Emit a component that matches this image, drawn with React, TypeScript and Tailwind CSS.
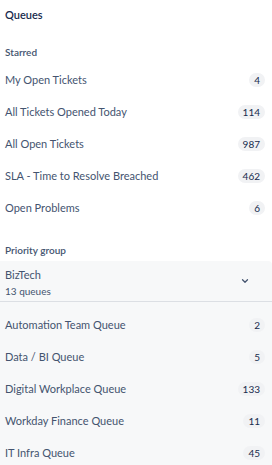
import React from "react";

type Queue = { name: string; count: number };

const starred: Queue[] = [
  { name: "My Open Tickets", count: 4 },
  { name: "All Tickets Opened Today", count: 114 },
  { name: "All Open Tickets", count: 987 },
  { name: "SLA - Time to Resolve Breached", count: 462 },
  { name: "Open Problems", count: 6 },
];

const bizTech: Queue[] = [
  { name: "Automation Team Queue", count: 2 },
  { name: "Data / BI Queue", count: 5 },
  { name: "Digital Workplace Queue", count: 133 },
  { name: "Workday Finance Queue", count: 11 },
  { name: "IT Infra Queue", count: 45 },
];

const QueueRow = ({ queue }: { queue: Queue }) => (
  <div className="flex h-8 items-center justify-between pl-[5px] pr-[7px]">
    <span className="text-[11px] text-[#44546f]">{queue.name}</span>
    <span className="flex h-[14px] min-w-[15px] items-center justify-center rounded-full bg-[#f1f2f4] px-[5px] text-[10px] text-[#172b4d]">
      {queue.count}
    </span>
  </div>
);

export default function App() {
  return (
    <div
      className="flex h-[465px] w-[272px] flex-col overflow-hidden bg-white"
      style={{ fontFamily: "Lato, 'Noto Sans', sans-serif" }}
    >
      <h1 className="px-[5px] pt-[7px] text-[11px] font-semibold leading-4 text-[#172b4d]">
        Queues
      </h1>
      <p className="mt-[21px] px-[5px] text-[10px] font-semibold leading-4 text-[#44546f]">
        Starred
      </p>
      <div className="mt-[4px] flex flex-col">
        {starred.map((q) => (
          <QueueRow key={q.name} queue={q} />
        ))}
      </div>
      <p className="mt-[18px] px-[5px] text-[10px] font-semibold leading-4 text-[#44546f]">
        Priority group
      </p>
      <div className="mt-[3px] flex flex-1 flex-col rounded-tr-[4px] bg-[#f7f8f9]">
        <div className="flex h-[41px] items-center justify-between border-b border-[#dcdfe4] pl-[5px] pr-[22px]">
          <div className="flex flex-col pt-[3px]">
            <span className="text-[11px] leading-4 text-[#44546f]">BizTech</span>
            <span className="text-[10px] leading-4 text-[#44546f]">13 queues</span>
          </div>
          <svg width="10" height="10" viewBox="0 0 24 24" fill="none">
            <path
              d="M6 9l6 6 6-6"
              stroke="#44546f"
              strokeWidth="3"
              strokeLinecap="round"
              strokeLinejoin="round"
            />
          </svg>
        </div>
        <div className="mt-[7px] flex flex-col">
          {bizTech.map((q) => (
            <QueueRow key={q.name} queue={q} />
          ))}
        </div>
      </div>
    </div>
  );
}
